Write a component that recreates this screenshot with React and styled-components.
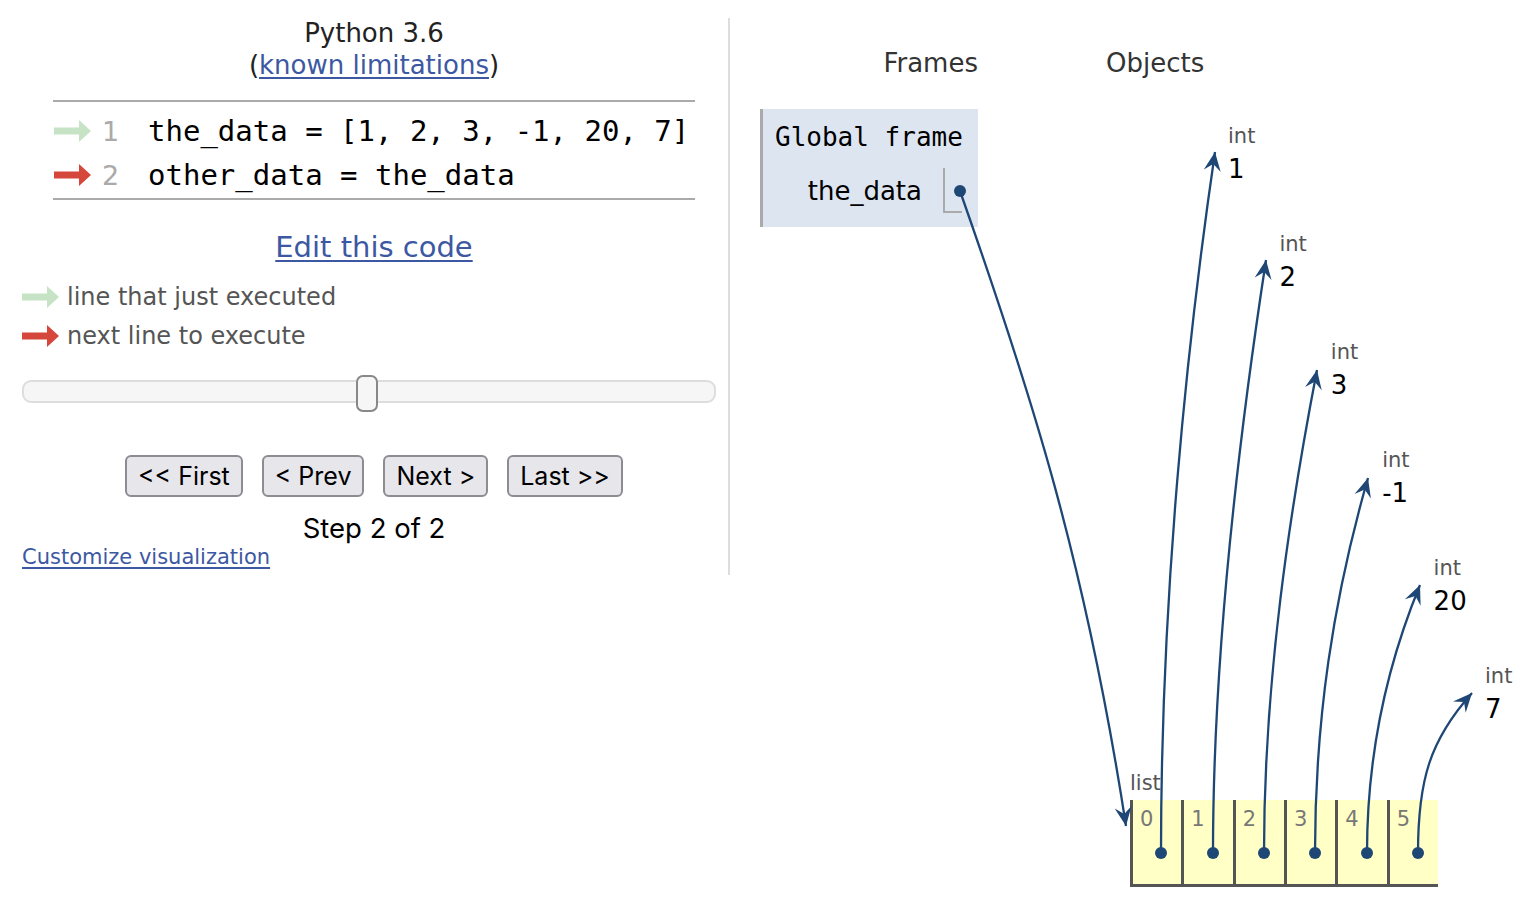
import React from "react"
import styled, { createGlobalStyle } from "styled-components"

const GlobalStyle = createGlobalStyle`
  html, body {
    margin: 0;
    padding: 0;
    background: #fff;
  }
  body {
    font-family: "DejaVu Sans", Verdana, sans-serif;
    color: #000;
  }
`

const LINK = "#3d58a2"
const POINTER = "#1e4775"

const Page = styled.div`
  position: relative;
  width: 1539px;
  height: 906px;
  display: flex;
  align-items: flex-start;
  overflow: hidden;
`

/* ---------- left: code + controls ---------- */

const LeftPanel = styled.div`
  margin-left: 22px;
  width: 704px;
  display: flex;
  flex-direction: column;
`

const Header = styled.div`
  margin-top: 17px;
  text-align: center;
  font-size: 26px;
  line-height: 32px;
  color: #222;
`

const Link = styled.a`
  color: ${LINK};
  text-decoration: underline;
  text-underline-offset: 3px;
  font-size: ${p => p.size || 26}px;
  cursor: pointer;
`

const CodeTable = styled.div`
  margin: 19px auto 0;
  width: 642px;
  border-top: 2px solid #aaa;
  border-bottom: 2px solid #aaa;
  padding: 7px 0 1px;
`

const CodeRow = styled.div`
  display: flex;
  align-items: center;
  height: 44px;
`

const ArrowSlot = styled.div`
  width: 38px;
  margin-left: 1px;
  display: flex;
  align-items: center;
`

const LineNo = styled.div`
  width: 38px;
  margin-left: 10px;
  font-size: 27px;
  color: #aaa;
`

const Code = styled.div`
  margin-left: 8px;
  font-family: "DejaVu Sans Mono", "Liberation Mono", monospace;
  font-size: 29px;
  line-height: 40px;
  white-space: pre;
  color: #000;
`

const EditRow = styled.div`
  margin-top: 29px;
  text-align: center;
  line-height: 36px;
`

const Legend = styled.div`
  margin-top: 7px;
  display: flex;
  flex-direction: column;
`

const LegendRow = styled.div`
  display: flex;
  align-items: center;
  height: 39px;
  font-size: 24px;
  color: #555;
  gap: 7px;
`

const Track = styled.div`
  position: relative;
  margin-top: 25px;
  width: 694px;
  height: 23px;
  box-sizing: border-box;
  border: 2px solid #ddd;
  border-radius: 9px;
  background: #f6f6f6;
`

const Handle = styled.div`
  position: absolute;
  top: -7px;
  left: 332px;
  width: 22px;
  height: 37px;
  box-sizing: border-box;
  border: 2px solid #888;
  border-radius: 7px;
  background: #f6f6f6;
`

const ButtonBar = styled.div`
  margin-top: 52px;
  display: flex;
  justify-content: center;
  gap: 19px;
`

const NavButton = styled.button`
  height: 42px;
  box-sizing: border-box;
  padding: 0 11px;
  border: 2px solid #8c8c92;
  border-radius: 6px;
  background: #e7e6eb;
  font-family: Inter, "Liberation Sans", sans-serif;
  font-size: 25px;
  color: #000;
  cursor: pointer;
`

const StepText = styled.div`
  margin-top: 15px;
  text-align: center;
  line-height: 32px;
  font-family: Inter, "Liberation Sans", sans-serif;
  font-size: 27.5px;
`

const CustomizeRow = styled.div`
  line-height: 26px;
`

const Divider = styled.div`
  margin-top: 18px;
  margin-left: 2px;
  width: 2px;
  height: 557px;
  background: #ddd;
`

/* ---------- right: frames + objects ---------- */

const RightPanel = styled.div`
  margin-left: 30px;
  display: flex;
  flex-direction: column;
`

const HeadRow = styled.div`
  margin-top: 47px;
  display: flex;
  font-size: 26px;
  line-height: 32px;
  color: #333;
`

const FramesHead = styled.div`
  width: 218px;
  text-align: right;
`

const ObjectsHead = styled.div`
  margin-left: 128px;
`

const Frame = styled.div`
  margin-top: 30px;
  width: 218px;
  height: 118px;
  box-sizing: border-box;
  border-left: 3px solid #aaa;
  background: #dde5f1;
  padding: 12px 16px 0 12px;
`

const FrameName = styled.div`
  font-family: "DejaVu Sans Mono", "Liberation Mono", monospace;
  font-size: 26px;
  line-height: 32px;
  white-space: nowrap;
`

const VarRow = styled.div`
  margin-top: 15px;
  display: flex;
  justify-content: flex-end;
  align-items: center;
  gap: 21px;
`

const VarName = styled.div`
  font-size: 26px;
  line-height: 36px;
  white-space: nowrap;
`

const VarValue = styled.div`
  width: 19px;
  height: 45px;
  box-sizing: border-box;
  border-left: 2px solid #aaa;
  border-bottom: 2px solid #aaa;
`

const ObjLabel = styled.div`
  font-size: 21px;
  line-height: 26px;
  color: #555;
`

const IntObj = styled.div`
  position: absolute;
  left: ${p => p.x}px;
  top: ${p => p.y}px;
`

const IntValue = styled.div`
  font-size: 26px;
  line-height: 40px;
`

const ListObj = styled.div`
  position: absolute;
  left: 1130px;
  top: 770px;
`

const ListCells = styled.div`
  margin-top: 4px;
  display: flex;
  border-bottom: 3px solid #555;
`

const Cell = styled.div`
  width: 51.33px;
  height: 84px;
  box-sizing: border-box;
  border-left: 3px solid #555;
  background: #ffffc6;
  padding: 4px 0 0 7px;
  font-size: 21px;
  line-height: 30px;
  color: #777;
`

const Overlay = styled.svg`
  position: absolute;
  left: 0;
  top: 0;
  pointer-events: none;
`

/* ---------- drawing helpers ---------- */

const LineArrow = ({ color }) => (
  <svg width="38" height="22" viewBox="0 0 38 22">
    <rect x="0" y="7.5" width="26" height="7" fill={color} />
    <polygon points="25,0 37,11 25,22" fill={color} />
  </svg>
)

const head = (tip, from) => {
  const dx = tip[0] - from[0]
  const dy = tip[1] - from[1]
  const len = Math.hypot(dx, dy)
  const ux = dx / len
  const uy = dy / len
  const px = -uy
  const py = ux
  const L = 19
  const W = 8.5
  const N = 12
  const b = [tip[0] - ux * L, tip[1] - uy * L]
  const n = [tip[0] - ux * N, tip[1] - uy * N]
  return [
    tip,
    [b[0] + px * W, b[1] + py * W],
    n,
    [b[0] - px * W, b[1] - py * W],
  ]
    .map(p => p.map(v => v.toFixed(1)).join(","))
    .join(" ")
}

const ints = [1, 2, 3, -1, 20, 7]

const links = [
  { s: [1161, 853], c1: [1161, 600], c2: [1186, 350], t: [1215, 152] },
  { s: [1213, 853], c1: [1213, 650], c2: [1240, 430], t: [1266, 260] },
  { s: [1264, 853], c1: [1264, 680], c2: [1290, 510], t: [1317, 370] },
  { s: [1315, 853], c1: [1315, 720], c2: [1333, 600], t: [1368, 478] },
  { s: [1367, 853], c1: [1367, 760], c2: [1385, 670], t: [1420, 585] },
  { s: [1418, 853], c1: [1418, 780], c2: [1430, 740], t: [1472, 693] },
  { s: [960, 191], c1: [1030, 390], c2: [1085, 560], t: [1126, 826] },
]

const Pointers = () => (
  <Overlay width="1539" height="906">
    {links.map((l, i) => {
      const d = `M${l.s[0]} ${l.s[1]} C${l.c1[0]} ${l.c1[1]}, ${l.c2[0]} ${l.c2[1]}, ${l.t[0]} ${l.t[1]}`
      return (
        <g key={i}>
          <path d={d} fill="none" stroke={POINTER} strokeWidth="2.3" />
          <polygon points={head(l.t, l.c2)} fill={POINTER} />
          <circle cx={l.s[0]} cy={l.s[1]} r="6" fill={POINTER} />
        </g>
      )
    })}
  </Overlay>
)

const App = () => {
  return (
    <Page>
      <GlobalStyle />
      <LeftPanel>
        <Header>
          <div>Python 3.6</div>
          <div>
            (<Link>known limitations</Link>)
          </div>
        </Header>

        <CodeTable>
          <CodeRow>
            <ArrowSlot>
              <LineArrow color="#c7e3c6" />
            </ArrowSlot>
            <LineNo>1</LineNo>
            <Code>the_data = [1, 2, 3, -1, 20, 7]</Code>
          </CodeRow>
          <CodeRow>
            <ArrowSlot>
              <LineArrow color="#d5473a" />
            </ArrowSlot>
            <LineNo>2</LineNo>
            <Code>other_data = the_data</Code>
          </CodeRow>
        </CodeTable>

        <EditRow>
          <Link size={29}>Edit this code</Link>
        </EditRow>

        <Legend>
          <LegendRow>
            <LineArrow color="#c7e3c6" />
            line that just executed
          </LegendRow>
          <LegendRow>
            <LineArrow color="#d5473a" />
            next line to execute
          </LegendRow>
        </Legend>

        <Track>
          <Handle />
        </Track>

        <ButtonBar>
          <NavButton>&lt;&lt; First</NavButton>
          <NavButton>&lt; Prev</NavButton>
          <NavButton>Next &gt;</NavButton>
          <NavButton>Last &gt;&gt;</NavButton>
        </ButtonBar>

        <StepText>Step 2 of 2</StepText>
        <CustomizeRow>
          <Link size={21}>Customize visualization</Link>
        </CustomizeRow>
      </LeftPanel>

      <Divider />

      <RightPanel>
        <HeadRow>
          <FramesHead>Frames</FramesHead>
          <ObjectsHead>Objects</ObjectsHead>
        </HeadRow>
        <Frame>
          <FrameName>Global frame</FrameName>
          <VarRow>
            <VarName>the_data</VarName>
            <VarValue />
          </VarRow>
        </Frame>
      </RightPanel>

      {ints.map((v, i) => (
        <IntObj key={i} x={1228 + 51.4 * i} y={123 + 108 * i}>
          <ObjLabel>int</ObjLabel>
          <IntValue>{v}</IntValue>
        </IntObj>
      ))}

      <ListObj>
        <ObjLabel>list</ObjLabel>
        <ListCells>
          {ints.map((_, i) => (
            <Cell key={i}>{i}</Cell>
          ))}
        </ListCells>
      </ListObj>

      <Pointers />
    </Page>
  )
}

export default App
